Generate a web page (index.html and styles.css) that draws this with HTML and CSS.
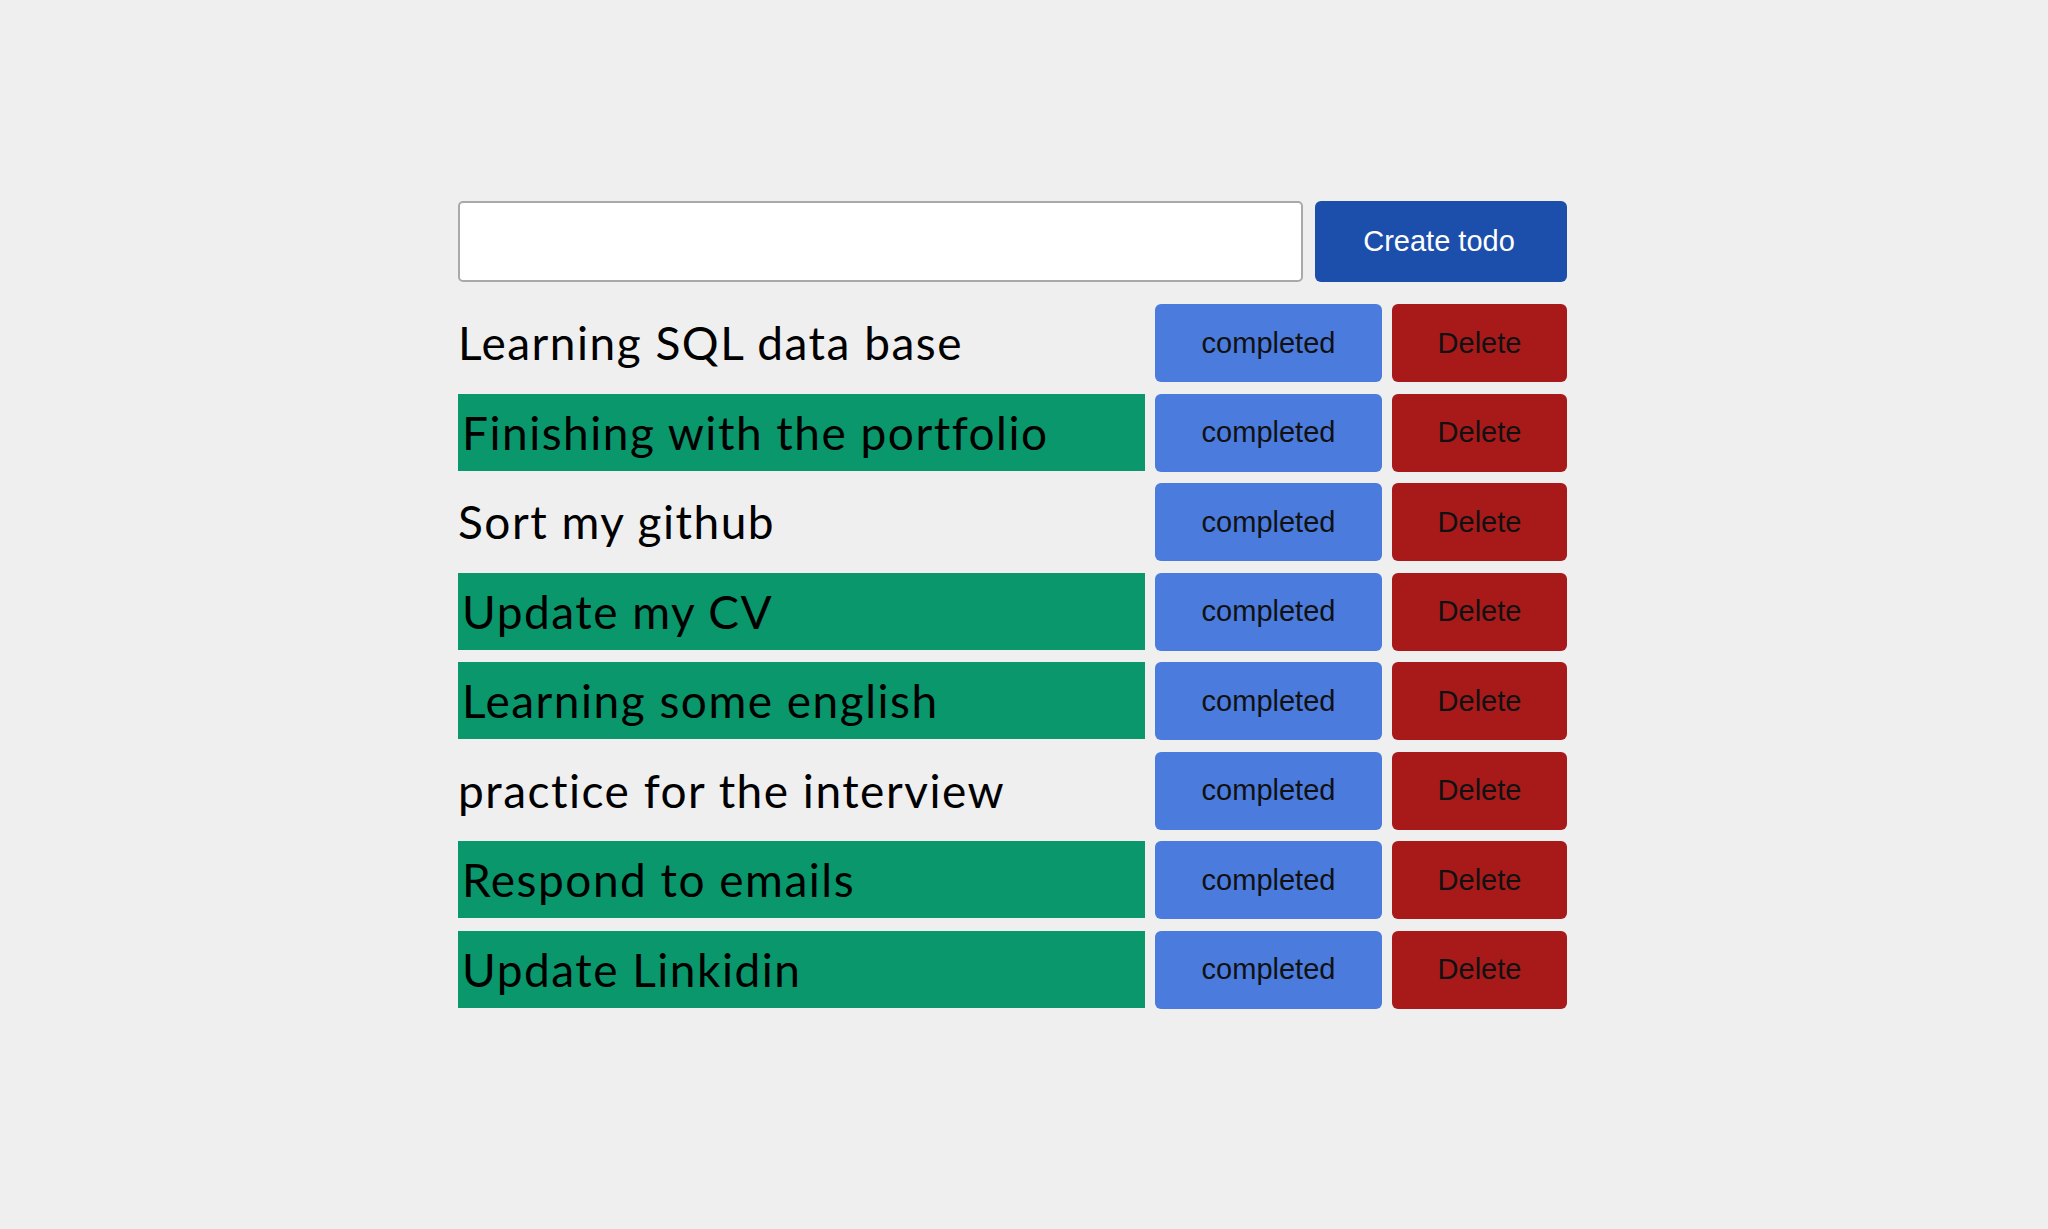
FILE: index.html
```html
<!DOCTYPE html>
<html lang="en">
<head>
<meta charset="utf-8">
<title>Todo</title>
<link rel="stylesheet" href="styles.css">
</head>
<body>
<main class="app">
  <form class="create-form">
    <input class="todo-input" type="text">
    <button class="create-btn" type="button">Create todo</button>
  </form>
  <ul class="todo-list">
    <li class="todo-item">
      <div class="todo-text">Learning SQL data base</div>
      <button class="btn btn-complete" type="button">completed</button>
      <button class="btn btn-delete" type="button">Delete</button>
    </li>
    <li class="todo-item">
      <div class="todo-text done">Finishing with the portfolio</div>
      <button class="btn btn-complete" type="button">completed</button>
      <button class="btn btn-delete" type="button">Delete</button>
    </li>
    <li class="todo-item">
      <div class="todo-text">Sort my github</div>
      <button class="btn btn-complete" type="button">completed</button>
      <button class="btn btn-delete" type="button">Delete</button>
    </li>
    <li class="todo-item">
      <div class="todo-text done">Update my CV</div>
      <button class="btn btn-complete" type="button">completed</button>
      <button class="btn btn-delete" type="button">Delete</button>
    </li>
    <li class="todo-item">
      <div class="todo-text done">Learning some english</div>
      <button class="btn btn-complete" type="button">completed</button>
      <button class="btn btn-delete" type="button">Delete</button>
    </li>
    <li class="todo-item">
      <div class="todo-text">practice for the interview</div>
      <button class="btn btn-complete" type="button">completed</button>
      <button class="btn btn-delete" type="button">Delete</button>
    </li>
    <li class="todo-item">
      <div class="todo-text done">Respond to emails</div>
      <button class="btn btn-complete" type="button">completed</button>
      <button class="btn btn-delete" type="button">Delete</button>
    </li>
    <li class="todo-item">
      <div class="todo-text done">Update Linkidin</div>
      <button class="btn btn-complete" type="button">completed</button>
      <button class="btn btn-delete" type="button">Delete</button>
    </li>
  </ul>
</main>
</body>
</html>
```

FILE: styles.css
```css
html, body {
  margin: 0;
  padding: 0;
  background: #efefef;
}

body {
  font-family: "Liberation Sans", Arial, sans-serif;
}

.app {
  width: 1109px;
  margin-left: 458px;
  padding-top: 201px;
}

.create-form {
  display: flex;
  gap: 12px;
  margin: 0 0 22px 0;
}

.todo-input {
  flex: 1;
  height: 81px;
  box-sizing: border-box;
  border: 2px solid #a9a9a9;
  border-radius: 5px;
  background: #ffffff;
  margin: 0;
}

.create-btn {
  width: 252px;
  height: 81px;
  border: none;
  border-radius: 6px;
  background: #1c4fab;
  color: #ffffff;
  font-family: "Liberation Sans", Arial, sans-serif;
  font-size: 29px;
  margin: 0;
  padding: 0 4px 0 0;
}

.todo-list {
  list-style: none;
  margin: 0;
  padding: 0;
  display: flex;
  flex-direction: column;
  gap: 11.57px;
}

.todo-item {
  display: flex;
  align-items: stretch;
  gap: 10px;
  height: 78px;
}

.todo-text {
  flex: 1;
  display: flex;
  align-items: center;
  font-family: "Lato", "Open Sans", sans-serif;
  font-size: 46px;
  letter-spacing: 1.5px;
  font-variant-ligatures: none;
  color: #000000;
  margin: 0 0 1px 0;
  white-space: nowrap;
}

.todo-text.done {
  background: #09976b;
  padding-left: 4px;
}

.btn {
  border: none;
  border-radius: 6px;
  font-family: "Liberation Sans", Arial, sans-serif;
  font-size: 29px;
  color: #111111;
  margin: 0;
  padding: 0;
}

.btn-complete {
  width: 227px;
  background: #4a7bdd;
}

.btn-delete {
  width: 175px;
  background: #a81a1a;
}
```
